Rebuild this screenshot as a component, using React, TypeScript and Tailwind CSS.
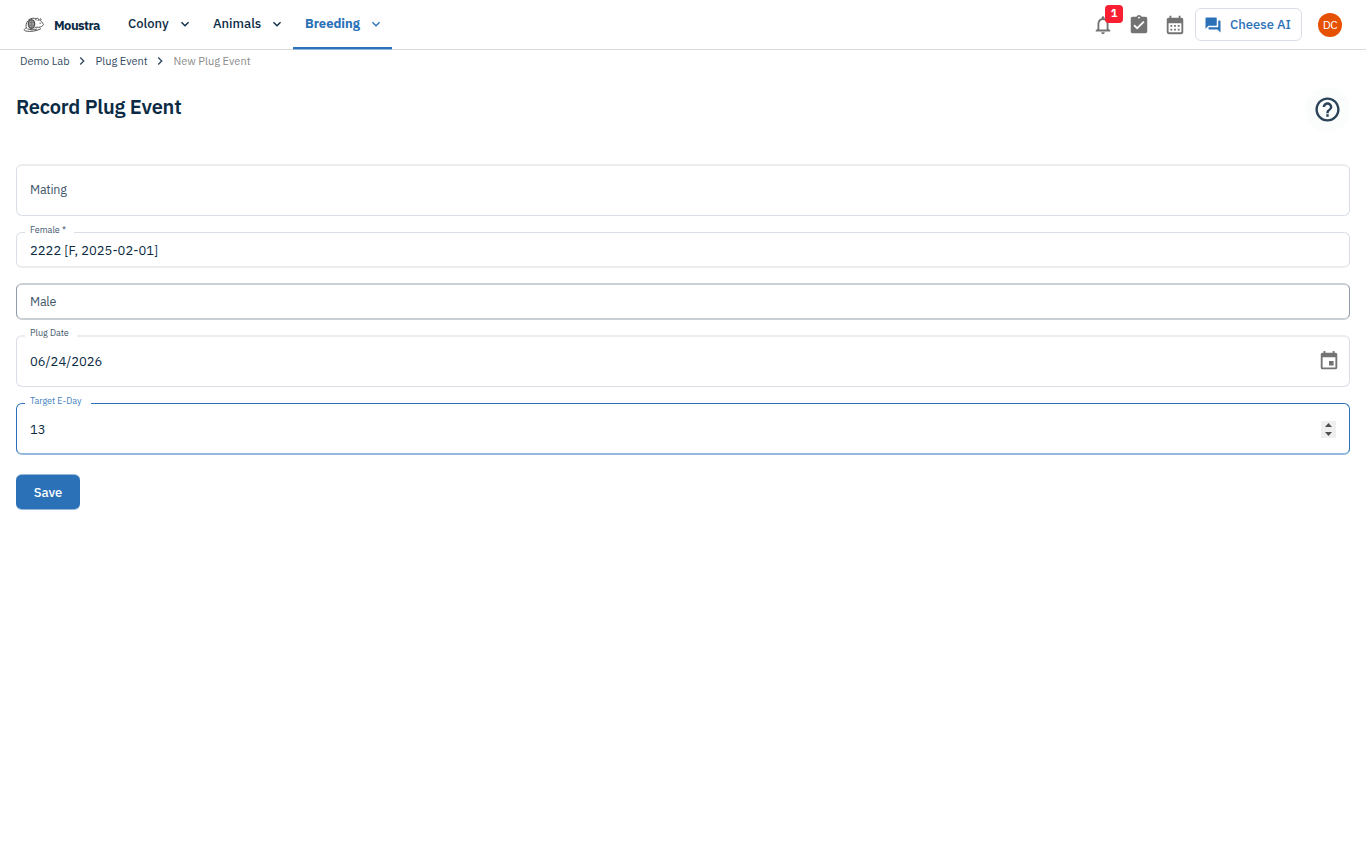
import React from "react";
import {
  MdAssignmentTurnedIn,
  MdCalendarMonth,
  MdEvent,
  MdExpandMore,
  MdHelpOutline,
  MdNavigateNext,
  MdNotificationsNone,
  MdQuestionAnswer,
} from "react-icons/md";

const menuOptions = [
  { name: "Colony", box: "w-[85px]", active: false },
  { name: "Animals", box: "w-[92px]", active: false },
  { name: "Breeding", box: "w-[99px]", active: true },
];

const MouseLogo = () => (
  <svg className="h-[17px] w-[22px]" viewBox="0 0 22 17" fill="none" stroke="#555" strokeWidth="1">
    <path d="M15.800 2.500c2 1 3.800 3 4.700 5.200-.8 1.400-2.600 2.200-4.500 2.600M5 3.500C7.500 1 11 .6 13 1.900M4.800 4C3 6 2.500 9 3.500 11.500" />
    <ellipse cx="8.500" cy="7" rx="3.200" ry="4.300" fill="#999" stroke="#4a4a4a" strokeWidth="1.200" />
    <path d="M8.500 3v8M5.500 5.500h6M5.500 8.500h6" stroke="#777" strokeWidth=".8" />
    <path d="M13 3.400c-.7-1.900 1.200-3 2.300-1.700.5.700.2 1.600-.6 2.300M17 1.800c.8-.4 1.200.3.900 1.500M16.600 6.200h1.200" stroke="#444" />
    <path d="M11.500 11c1.500-1.400 3.500-.6 4.800-.5M3.300 11c-2.700 1-2.700 2.600-.5 3 4.500.9 10.200.3 15.200-2.300M4.500 11.800c2.800 1.300 6.500 1.200 9.500.2" />
  </svg>
);

const Header = () => {
  return (
    <header className="flex h-[50px] items-start border-b border-[#d9dbdd]">
      {/* Logo */}
      <div className="flex w-[116px] items-center gap-[9px] pt-4 pl-[23px]">
        <MouseLogo />
        <span className="pt-[2px] text-[13px] leading-4 font-bold tracking-[-0.55px]">Moustra</span>
      </div>

      {/* Menu Options */}
      <nav className="flex">
        {menuOptions.map((menu) => (
          <a
            key={menu.name}
            className={`flex items-start justify-between px-3 pt-[14px] ${menu.box} ${
              menu.active
                ? "h-[49px] border-b-2 border-[#2b71b8] font-bold text-[#2b71b8] shadow-[0_1px_0_#95b8db]"
                : "h-[49px] font-medium"
            }`}
          >
            <span className="text-[13px] leading-5">{menu.name}</span>
            <MdExpandMore className="mr-[-3.500px] mt-[1.500px] size-4" />
          </a>
        ))}
      </nav>

      {/* Actions */}
      <div className="ml-auto flex h-[49px] items-center pr-6 text-[#737373]">
        <div className="relative mr-[14px]">
          <MdNotificationsNone className="size-[22px]" />
          <span className="absolute -top-[9px] left-[13px] flex h-[18px] w-[18px] items-center justify-center rounded-[4px] bg-[#fa1e32] text-[11px] font-bold text-white">
            1
          </span>
        </div>
        <MdAssignmentTurnedIn className="mr-[14px] size-[22px]" />
        <MdCalendarMonth className="mr-[9px] size-[22px]" />
        <button className="flex h-[33px] w-[107px] items-center rounded-[6px] border border-[#dadee7] pl-2 text-[#2b71b8]">
          <MdQuestionAnswer className="mr-2 size-[18px]" />
          <span className="text-[13px] font-medium">Cheese AI</span>
        </button>
        <span className="ml-4 flex size-6 items-center justify-center rounded-full bg-[#e65100] text-[12px] tracking-[-0.5px] text-white">
          DC
        </span>
      </div>
    </header>
  );
};

type FieldProps = {
  label: string;
  value?: string;
  box: string;
  color?: string;
  notch?: string;
  children?: React.ReactNode;
};

const Field = ({ label, value, box, color = "text-[#42566a]", notch, children }: FieldProps) => (
  <div className={`relative flex items-center rounded-[6px] pr-[11px] pl-[13px] ${box}`}>
    {value ? (
      <>
        <span className={`absolute left-2 h-3 bg-white pl-[5px] text-[9px] leading-3 ${color} ${notch}`}>
          {label}
        </span>
        <span className="text-[13px]">{value}</span>
      </>
    ) : (
      <span className={`text-[12.500px] tracking-[-0.25px] ${color}`}>{label}</span>
    )}
    {children}
  </div>
);

const App = () => {
  return (
    <div className="min-h-screen bg-white font-['IBM_Plex_Sans','Roboto',sans-serif] text-[#0b2b45]">
      <Header />

      {/* Breadcrumbs */}
      <div className="flex h-[22px] items-center pl-5 text-[11px] text-[#334c62]">
        <span className="w-[50px] whitespace-nowrap">Demo Lab</span>
        <MdNavigateNext className="mr-[5.500px] ml-1 size-[16px]" />
        <span className="w-[53px] whitespace-nowrap">Plug Event</span>
        <MdNavigateNext className="mr-[5.500px] ml-[3.500px] size-[16px]" />
        <span className="text-[#8c8c8c]">New Plug Event</span>
      </div>

      <main className="px-4">
        <div className="flex items-start justify-between pt-[15px]">
          <h1 className="pt-[6px] text-[20px] leading-7 font-semibold tracking-[-0.2px]">Record Plug Event</h1>
          <button className="flex size-[45px] items-center justify-center rounded-full bg-[#fbfcfc] text-[#2b4257]">
            <MdHelpOutline className="size-[29px]" />
          </button>
        </div>

        <form className="pt-8">
          <Field label="Mating" box="h-[52px] border border-t-2 border-[#dadee7] border-t-[#ededf0] pb-[2px]" />
          <Field
            label="Female *"
            value="2222 [F, 2025-02-01]"
            notch="-top-[9px] w-[49px]"
            box="mt-4 h-9 border border-b-2 border-[#dadee7] border-b-[#ededf0] pt-[2px]"
          />
          <Field label="Male" box="mt-[15px] h-[37px] border border-y-2 border-[#8f9ba8] border-y-[#cbd0d5]" />
          <Field
            label="Plug Date"
            value="06/24/2026"
            notch="-top-[10px] w-[52px]"
            box="mt-[15px] h-[52px] border border-t-2 border-[#dadee7] border-t-[#ededf0]"
          >
            <MdEvent className="mr-[-1.500px] mb-px ml-auto size-[22px] text-[#737373]" />
          </Field>
          <Field
            label="Target E-Day"
            value="13"
            notch="-top-[9px] w-[66px]"
            color="text-[#4382c2]"
            box="mt-4 h-[52px] border border-b-2 border-[#2b71b8] border-b-[#95b8db] pt-[2px]"
          >
            <span className="mr-[2px] ml-auto flex h-[17px] w-[15px] items-center justify-center bg-[#efefef]">
              <svg className="h-[13px] w-[7px]" viewBox="0 0 7 13" fill="#505050">
                <path d="M0 4 3.500 0 7 4zM0 9h7l-3.500 4z" />
              </svg>
            </span>
          </Field>
          <button
            type="button"
            className="mt-[19px] flex h-9 w-16 items-center justify-center rounded-[6px] border-y border-[#95b8db] bg-[#2b71b8] pt-[2px] text-[13px] font-medium text-white"
          >
            Save
          </button>
        </form>
      </main>
    </div>
  );
};

export default App;
